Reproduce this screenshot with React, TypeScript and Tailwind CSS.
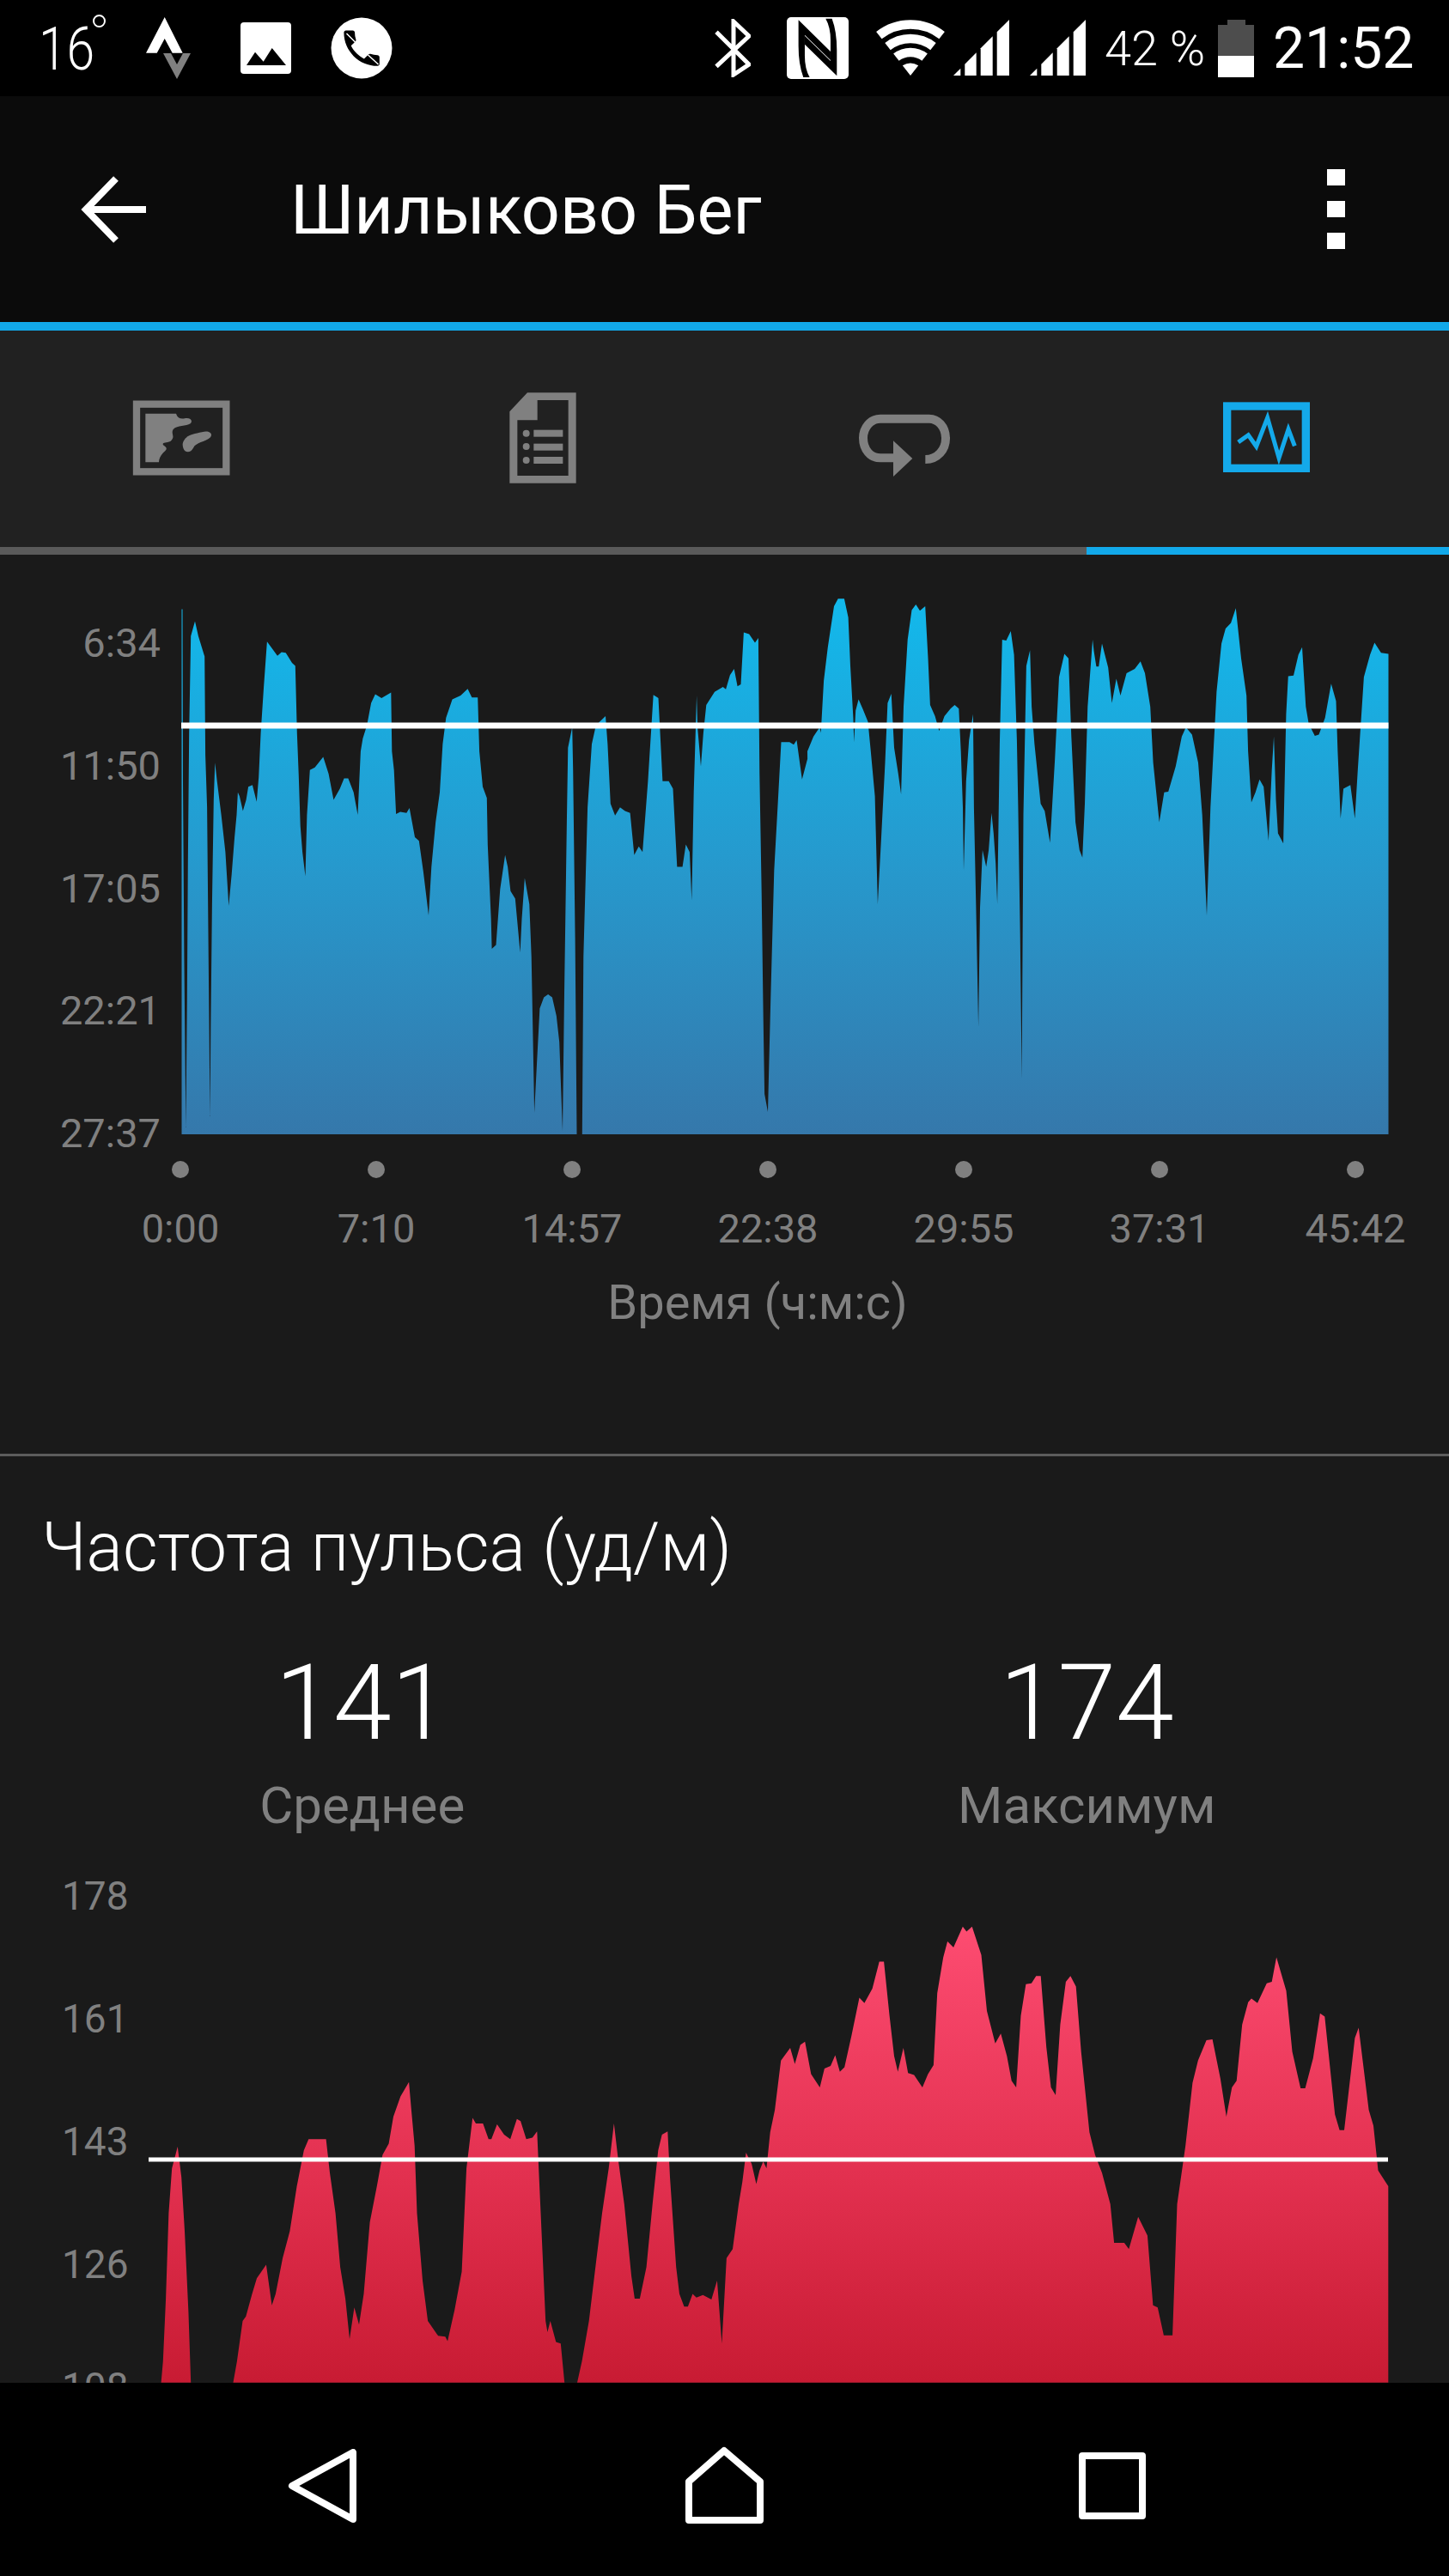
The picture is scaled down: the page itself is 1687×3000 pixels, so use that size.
import React from "react";

// traced outlines of the two charts, in reference pixels
const scale = (pts: number[][], ox: number, oy: number, sx: number, sy: number) =>
  pts.map(([x, y]) => [ox + x / sx, oy + y / sy]);

const toPoints = (pts: number[][]) => pts.map(([x, y]) => `${x.toFixed(1)},${y.toFixed(1)}`).join(" ");

const paceA = [[65,1478],[65,68],[67,68],[68,530],[71,1000],[75,1460],[78,1120],[80,750],[83,400],[87,140],[97,100],[105,140],[120,195],[122,460],[126,600],[128,820],[133,1430],[135,1180],[138,860],[142,580],[145,480],[150,530],[160,620],[170,720],[178,865],[185,780],[192,680],[197,620],[200,560],[204,570],[212,610],[220,580],[225,545],[235,540],[245,585],[250,520],[255,400],[262,280],[270,155],[280,170],[295,193],[305,183],[315,185],[330,212],[338,220],[342,400],[346,510],[350,650],[355,720],[362,785],[366,620],[373,500],[385,493],[405,465],[418,510],[430,580],[445,550],[455,522],[465,522],[478,560],[488,620],[495,450],[500,415],[510,380],[520,320],[530,296],[545,307],[568,292],[570,450],[575,500],[580,618],[590,612],[605,615],[612,602],[625,680],[635,690],[645,770],[658,890],[665,760],[675,640],[685,560],[692,430],[700,360],[715,310],[735,300],[752,282],[762,305],[776,305],[780,450],[788,545],[798,575],[800,700],[808,900],[810,980],[820,970],[830,820],[842,728],[848,760],[855,825],[866,845],[878,990],[882,900],[889,790],[900,860],[905,1000],[908,1170],[912,1420],[918,1290],[925,1140],[935,1110],[945,1102],[955,1110],[965,1160],[972,1230],[980,1470],[984,1100],[990,640],[993,440],[1003,385],[1005,500],[1010,950],[1014,1478],[1027,1478],[1030,1000],[1040,600],[1050,430],[1060,380],[1083,355],[1088,430],[1095,590],[1106,622],[1118,600],[1130,610],[1142,615],[1152,728],[1163,705],[1172,720],[1185,530],[1198,298],[1210,307],[1220,530],[1235,530],[1245,550],[1255,760],[1268,760],[1276,700],[1285,720],[1290,850],[1295,560],[1302,300],[1304,385],[1312,490],[1318,400],[1325,325],[1345,290],[1365,277],[1372,283],[1382,245],[1392,228],[1400,275],[1408,270],[1415,130],[1428,135],[1442,158],[1450,145],[1453,510],[1458,830],[1462,1170],[1465,1370],[1473,1418],[1480,1100],[1488,770],[1497,590],[1505,425],[1525,425],[1535,432],[1542,420],[1555,525],[1568,470]];
const paceB = [[0,450],[15,410],[30,385],[33,400],[40,260],[50,170],[65,60],[75,40],[90,40],[100,90],[105,220],[112,360],[114,425],[118,340],[125,310],[135,335],[148,370],[155,450],[165,570],[172,860],[180,690],[190,480],[196,320],[205,295],[212,440],[222,510],[229,565],[235,330],[245,150],[255,70],[265,55],[275,72],[288,60],[295,200],[300,325],[312,355],[322,395],[335,355],[350,335],[360,325],[370,335],[375,450],[380,600],[382,770],[388,530],[395,420],[405,350],[407,600],[412,860],[418,1190],[422,870],[428,715],[437,760],[443,715],[450,615],[455,670],[460,750],[464,860],[470,430],[476,150],[486,152],[497,127],[505,190],[512,420],[515,600],[520,940],[524,1330],[528,620],[535,220],[544,178],[548,330],[555,430],[570,590],[580,610],[593,695],[605,470],[615,250],[628,188],[638,200],[645,410],[655,640],[665,715],[672,735],[678,590],[685,330],[697,150],[700,180],[706,222],[712,222],[720,160],[735,225],[744,320],[755,255],[765,300],[780,240],[800,228],[814,208],[825,240],[838,330],[845,480],[860,640],[872,560],[882,558],[900,490],[915,410],[925,385],[940,405],[955,480],[965,620],[976,890],[985,600],[1000,290],[1012,160],[1022,120],[1035,105],[1047,65],[1060,200],[1073,300],[1077,450],[1085,587],[1095,560],[1105,525],[1115,545],[1127,690],[1135,500],[1140,410],[1145,580],[1150,670],[1163,697],[1170,350],[1175,248],[1188,246],[1200,190],[1209,170],[1218,330],[1225,375],[1240,408],[1250,405],[1265,360],[1280,268],[1292,315],[1296,450],[1303,630],[1310,550],[1327,540],[1338,630],[1345,500],[1360,250],[1375,190],[1386,158],[1402,185],[1420,188],[1420,1478]];
const pulseA = [[342,1137],[346,1090],[352,950],[358,760],[365,660],[377,612],[385,680],[392,800],[400,980],[405,1137],[495,1137],[503,1090],[515,1000],[522,990],[535,940],[545,905],[565,875],[577,965],[585,940],[600,860],[615,800],[630,700],[645,620],[655,595],[692,595],[700,670],[712,760],[722,880],[733,950],[742,1040],[752,970],[762,1008],[772,940],[785,780],[800,700],[812,630],[825,605],[835,545],[850,500],[868,468],[873,530],[880,610],[885,760],[897,910],[908,1000],[930,1033],[945,1035],[950,1045],[965,975],[980,890],[990,660],[1003,548],[1010,560],[1025,560],[1037,595],[1043,595],[1055,562],[1070,585],[1083,595],[1097,550],[1105,555],[1117,595],[1130,592],[1140,578],[1145,700],[1158,1000],[1162,1025],[1168,1000],[1180,1047],[1190,1050],[1198,1137],[1225,1137],[1235,1090],[1250,1000],[1265,870],[1278,760],[1292,660],[1303,560],[1312,640],[1325,740],[1340,900],[1347,950],[1358,950],[1372,880],[1385,740],[1397,620],[1405,585],[1417,578],[1422,680],[1435,880],[1442,940],[1452,968],[1460,968],[1470,940],[1478,948],[1492,942],[1510,952],[1522,910],[1532,1050],[1542,860],[1555,840]];
const pulseB = [[37,740],[45,690],[53,625],[65,650],[75,695],[82,665],[90,645],[97,660],[105,580],[115,530],[128,420],[148,392],[158,428],[170,385],[180,378],[193,450],[212,480],[222,438],[235,432],[245,408],[255,445],[265,435],[280,365],[297,280],[308,292],[325,260],[340,200],[350,200],[362,320],[372,410],[380,445],[392,392],[402,448],[415,452],[433,480],[445,450],[457,430],[465,270],[478,190],[487,155],[500,168],[520,122],[528,133],[540,122],[560,185],[572,310],[590,382],[602,360],[615,410],[625,465],[635,480],[645,320],[656,250],[668,248],[678,232],[688,232],[700,390],[710,480],[720,497],[730,340],[742,245],[752,232],[764,255],[775,400],[793,580],[805,630],[820,670],[838,740],[846,826],[868,826],[878,840],[898,768],[918,810],[930,965],[940,970],[953,1032],[972,1032],[982,740],[1000,610],[1015,470],[1027,420],[1045,375],[1058,373],[1075,460],[1088,545],[1100,480],[1110,465],[1122,340],[1135,290],[1142,282],[1155,292],[1175,248],[1186,245],[1196,190],[1217,265],[1230,400],[1248,482],[1258,482],[1275,415],[1290,315],[1300,322],[1322,540],[1332,575],[1342,575],[1365,370],[1373,347],[1395,530],[1405,565],[1415,665],[1437,700],[1437,1137]];

const paceLine = [...scale(paceA, 180, 680, 2.063, 2.306), ...scale(paceB, 940, 680, 2.099, 2.306)];
const pulseLine = [...scale(pulseA, 0, 2180, 1.823, 1.912), ...scale(pulseB, 840, 2180, 1.851, 1.912)];

const wifiArc = (r: number) => {
  const dx = r * Math.sin((38 * Math.PI) / 180);
  const dy = r * Math.cos((38 * Math.PI) / 180);
  return `M${1060 - dx} ${90 - dy} A${r} ${r} 0 0 1 ${1060 + dx} ${90 - dy}`;
};

function SignalBars() {
  return (
    <svg width="65" height="66" viewBox="1110 25 65 66" className="shrink-0" fill="#fff">
      <path d="M1110 90 L1118.3 81.7 V90Z" />
      <path d="M1123.3 90 V76.7 L1136.7 63.3 V90Z" />
      <path d="M1141.7 90 V58.3 L1155.7 44.3 V90Z" />
      <path d="M1160.7 90 V39.3 L1175 25 V90Z" />
    </svg>
  );
}

function StatusBar() {
  return (
    <div className="h-[112px] shrink-0 bg-black flex items-center text-white">
      <div className="w-[170px] shrink-0 pl-[45px] pt-[2px] relative">
        <div className="text-[70px] leading-none font-light origin-left scale-x-[.84]">16</div>
        <div className="absolute left-[108px] top-[-3px] w-[15px] h-[15px] rounded-full border-2 border-white"></div>
      </div>
      <svg width="52" height="72" viewBox="170 20 52 72" className="shrink-0">
        <path d="M191.7 20 L212.7 61.7 H200.7 L191.7 45 L182.7 61.7 H170Z" fill="#fff" />
        <path d="M190 62 L206 92 L222 62 H213 L206 75 L199 62Z" fill="#808080" />
      </svg>
      <svg width="59" height="60" viewBox="280 26 59 60" className="shrink-0 ml-[58px]">
        <rect x="280" y="26" width="59" height="60" rx="4" fill="#fff" />
        <path d="M287 76 L297 60.7 L306.7 71.7 L316.7 56 L333 76Z" fill="#000" />
      </svg>
      <svg width="72" height="72" viewBox="385.5 20 72 72" className="shrink-0 ml-[46px]">
        <circle cx="421.5" cy="56" r="35.5" fill="#fff" />
        <g transform="translate(394 28.5) scale(2.3)">
          <path
            fill="#000"
            d="M6.62 10.79c1.44 2.83 3.76 5.14 6.59 6.59l2.2-2.2c.27-.27.67-.36 1.02-.24 1.12.37 2.33.57 3.57.57.55 0 1 .45 1 1V20c0 .55-.45 1-1 1-9.39 0-17-7.61-17-17 0-.55.45-1 1-1h3.5c.55 0 1 .45 1 1 0 1.25.2 2.45.57 3.57.11.35.03.74-.25 1.02l-2.2 2.2z"
          />
        </g>
        <path d="M404 39 L414 49 M429 64 L441 75" stroke="#fff" strokeWidth="1.5" />
      </svg>
      <svg width="42" height="68" viewBox="832 23 42 68" fill="none" stroke="#fff" strokeWidth="5" className="shrink-0 ml-[375px]">
        <path d="M834 38.3 L872 76 L854 88 V26 L872 43 L834 78.3" />
      </svg>
      <svg width="72" height="72" viewBox="915.7 20 72 72" className="shrink-0 ml-[42px]">
        <rect x="915.7" y="20" width="72" height="72" rx="5" fill="#fff" />
        <g transform="translate(810 10) scale(.3333)" fill="#000">
          <path d="M375 240 Q358 195 358 130 L358 40 L470 150 L470 180 L380 92 L380 165 Q380 210 397 240Z" />
          <path d="M475 35 Q492 80 492 145 L492 235 L380 125 L380 95 L470 183 L470 110 Q470 65 453 35Z" />
        </g>
      </svg>
      <svg width="80" height="66" viewBox="1020 25 80 66" fill="none" stroke="#fff" strokeWidth="10.5" className="shrink-0 ml-[32px]">
        <path d={wifiArc(59.5)} />
        <path d={wifiArc(43)} />
        <path d={wifiArc(27)} />
        <path d="M1060 90 L1050.8 78.2 Q1060 73 1069.2 78.2Z" fill="#fff" stroke="none" />
      </svg>
      <div className="ml-[10px] shrink-0 flex"><SignalBars /></div>
      <div className="ml-[24px] shrink-0 flex"><SignalBars /></div>
      <div className="ml-[22px] pt-[2px] w-[122px] shrink-0 text-[56px] leading-none font-light whitespace-nowrap">42 %</div>
      <div className="ml-[10px] w-[42px] h-[67px] shrink-0 flex flex-col items-center">
        <div className="w-[21px] h-[6px] bg-[#4d4d4d]"></div>
        <div className="w-full h-[36px] bg-[#4d4d4d]"></div>
        <div className="w-full h-[25px] bg-white"></div>
      </div>
      <div className="ml-[22px] pt-[2px] text-[66px] leading-none whitespace-nowrap">21:52</div>
    </div>
  );
}

function Header() {
  return (
    <div className="h-[263px] shrink-0 bg-[#0b0b0b] flex items-center text-white">
      <svg width="76" height="78" viewBox="94 204 76 78" fill="none" stroke="#fff" strokeWidth="8" className="ml-[94px] shrink-0">
        <path d="M170 243 H101 M135 207 L100 243 L135 279" />
      </svg>
      <div className="ml-[168px] mt-[3px] text-[79px] leading-none whitespace-nowrap">Шилыково Бег</div>
      <div className="ml-auto mr-[121px] flex flex-col gap-[18px]">
        <div className="w-[21px] h-[19px] bg-white"></div>
        <div className="w-[21px] h-[19px] bg-white"></div>
        <div className="w-[21px] h-[19px] bg-white"></div>
      </div>
    </div>
  );
}

function Tabs() {
  return (
    <>
      <div className="h-[10px] shrink-0 bg-[#12a9ea]"></div>
      <div className="h-[252px] shrink-0 bg-[#212121] grid grid-cols-4">
        <div className="flex items-center justify-center">
          <svg width="140" height="140" viewBox="3 3 420 420">
            <rect x="57" y="92" width="313" height="236" fill="none" stroke="#808080" strokeWidth="25" />
            <path fill="#808080" d="M88 125 L195 125 C200 140 210 145 225 142 C245 138 255 150 245 160 C230 170 200 165 185 180 C175 195 195 205 175 222 C160 228 145 225 150 235 C165 245 165 250 150 262 C140 272 135 285 135 295 L88 295Z" />
            <path fill="#808080" d="M225 215 C235 200 260 195 285 190 C310 182 325 195 315 208 C295 225 265 225 255 245 C245 265 225 262 220 245 C216 232 218 225 225 215Z" />
          </svg>
        </div>
        <div className="flex items-center justify-center">
          <svg width="140" height="140" viewBox="-53 3 420 420" fill="#808080">
            <path fillRule="evenodd" d="M38 118 L100 52 H270 V368 H38Z M65 148 V342 H243 V78 H135 V148Z" />
            <circle cx="96" cy="194" r="12" />
            <circle cx="96" cy="240" r="12" />
            <circle cx="96" cy="288" r="12" />
            <rect x="122" y="182" width="102" height="24" />
            <rect x="122" y="230" width="102" height="24" />
            <rect x="122" y="276" width="102" height="24" />
          </svg>
        </div>
        <div className="flex items-center justify-center">
          <svg width="140" height="140" viewBox="-3 -57 420 420">
            <path fill="none" stroke="#808080" strokeWidth="30" d="M277 225 C320 225 348 190 348 152 C348 110 320 83 290 83 L120 83 C85 83 60 115 60 150 C60 190 85 220 120 220 L175 220" />
            <path fill="#808080" d="M165 160 L232 222 L165 285Z" />
          </svg>
        </div>
        <div className="flex items-center justify-center">
          <svg width="140" height="140" viewBox="-12 -27 420 420" fill="none" stroke="#14a9ea">
            <rect x="56" y="69" width="275" height="217" strokeWidth="28" />
            <path strokeWidth="15" d="M95 195 L130 170 L158 210 L197 110 L237 250 L270 150 L292 208" />
          </svg>
        </div>
      </div>
      <div className="h-[9px] shrink-0 bg-[#5a5a5a] flex justify-end">
        <div className="w-1/4 bg-[#12a9ea]"></div>
      </div>
    </>
  );
}

const paceLabels = ["6:34", "11:50", "17:05", "22:21", "27:37"];
const timeLabels = ["0:00", "7:10", "14:57", "22:38", "29:55", "37:31", "45:42"];
const pulseLabels = ["178", "161", "143", "126", "108"];

function PaceChart() {
  return (
    <div>
      <div className="flex h-[672px] items-start">
        <div className="w-[190px] h-[666px] shrink-0 pt-[43px] pr-[3px] flex flex-col items-end justify-between text-[47px] leading-[52px] text-[#808080]">
          {paceLabels.map((l) => (
            <div key={l}>{l}</div>
          ))}
        </div>
        <svg width="1497" height="672" viewBox="190 680 1497 672" className="shrink-0">
          <defs>
            <linearGradient id="paceFill" gradientUnits="userSpaceOnUse" x1="0" y1="695" x2="0" y2="1321">
              <stop offset="0" stopColor="#12b9ec" />
              <stop offset="0.5" stopColor="#2699cd" />
              <stop offset="1" stopColor="#3578ab" />
            </linearGradient>
          </defs>
          <polygon points={toPoints(paceLine)} fill="url(#paceFill)" />
          <rect x="211" y="841.5" width="1405.5" height="7" fill="#fff" />
        </svg>
      </div>
      <div className="ml-[96px] w-[1596px] grid grid-cols-7 text-[47px] leading-[52px] text-[#808080]">
        {timeLabels.map((t) => (
          <div key={t} className="flex flex-col items-center">
            <div className="w-5 h-5 rounded-full bg-[#808080]"></div>
            <div className="mt-[33px]">{t}</div>
          </div>
        ))}
      </div>
      <div className="mt-[30px] pl-[77px] text-center text-[56px] leading-[60px] text-[#808080]">Время (ч:м:с)</div>
    </div>
  );
}

function PulseSection() {
  return (
    <div>
      <div className="mt-[61px] pl-[48px] text-[79px] leading-[90px] font-light text-white">Частота пульса (уд/м)</div>
      <div className="grid grid-cols-2 text-center">
        <div>
          <div className="mt-[72px] text-[122px] leading-[130px] font-light text-white">141</div>
          <div className="mt-[20px] text-[60px] leading-[68px] text-[#808080]">Среднее</div>
        </div>
        <div>
          <div className="mt-[72px] text-[122px] leading-[130px] font-light text-white">174</div>
          <div className="mt-[20px] text-[60px] leading-[68px] text-[#808080]">Максимум</div>
        </div>
      </div>
      <div className="flex">
        <div className="w-[165px] shrink-0 pl-[72px] text-[46px] text-[#808080]">
          {pulseLabels.map((l) => (
            <div key={l} className="h-[143px] flex items-center">{l}</div>
          ))}
        </div>
        <svg width="1522" height="715" viewBox="165 2137 1522 715" className="shrink-0">
          <defs>
            <linearGradient id="pulseFill" gradientUnits="userSpaceOnUse" x1="0" y1="2245" x2="0" y2="2775">
              <stop offset="0" stopColor="#fd4c71" />
              <stop offset="0.55" stopColor="#e2304f" />
              <stop offset="1" stopColor="#c81b33" />
            </linearGradient>
          </defs>
          <polygon points={toPoints(pulseLine)} fill="url(#pulseFill)" />
          <rect x="173" y="2512.5" width="1443" height="5" fill="#fff" />
        </svg>
      </div>
    </div>
  );
}

function NavBar() {
  return (
    <div className="h-[225px] shrink-0 bg-black flex items-center pl-[335px] pt-[15px]">
      <svg width="80" height="86" viewBox="335 2852 80 86" fill="none" stroke="#fff" strokeWidth="8" strokeLinejoin="round" className="shrink-0">
        <path d="M340 2895 L411 2856 V2934Z" />
      </svg>
      <svg width="92" height="92" viewBox="797 2847 92 92" fill="none" stroke="#fff" strokeWidth="8" strokeLinejoin="round" className="shrink-0 ml-[382px]">
        <path d="M802 2888 L843 2852 L885 2888 V2933 H802Z" />
      </svg>
      <div className="w-[78px] h-[78px] shrink-0 ml-[367px] rounded-[4px] border-[8px] border-white"></div>
    </div>
  );
}

export default function App() {
  return (
    <div className="h-[3000px] flex flex-col overflow-hidden bg-[#1a1a1a] font-[Roboto,sans-serif]">
      <StatusBar />
      <Header />
      <Tabs />
      <div className="flex-1 min-h-0 overflow-hidden pt-[34px]">
        <PaceChart />
        <div className="mt-[146px] h-[3px] bg-[#5c5c5c]"></div>
        <PulseSection />
      </div>
      <NavBar />
    </div>
  );
}
